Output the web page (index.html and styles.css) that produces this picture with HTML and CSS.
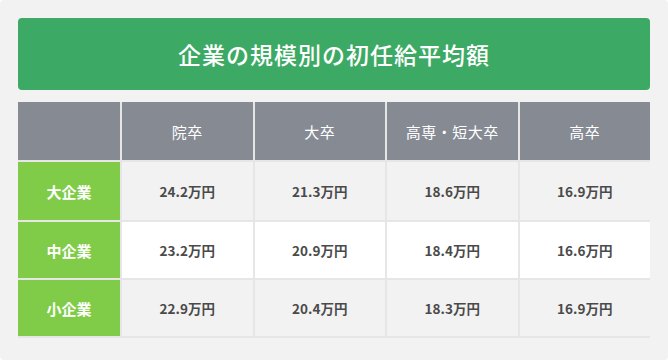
FILE: index.html
```html
<!DOCTYPE html>
<html lang="ja">
<head>
<meta charset="utf-8">
<link rel="stylesheet" href="styles.css">
</head>
<body>
<div class="card">
  <h1 class="title">企業の規模別の初任給平均額</h1>
  <div class="table">
    <div class="th corner"></div>
    <div class="th">院卒</div>
    <div class="th">大卒</div>
    <div class="th">高専・短大卒</div>
    <div class="th">高卒</div>

    <div class="rh r1">大企業</div>
    <div class="td odd r1">24.2万円</div>
    <div class="td odd r1">21.3万円</div>
    <div class="td odd r1">18.6万円</div>
    <div class="td odd r1">16.9万円</div>

    <div class="rh">中企業</div>
    <div class="td even">23.2万円</div>
    <div class="td even">20.9万円</div>
    <div class="td even">18.4万円</div>
    <div class="td even">16.6万円</div>

    <div class="rh">小企業</div>
    <div class="td odd">22.9万円</div>
    <div class="td odd">20.4万円</div>
    <div class="td odd">18.3万円</div>
    <div class="td odd">16.9万円</div>
  </div>
</div>
</body>
</html>
```

FILE: styles.css
```css
html, body {
  margin: 0;
  padding: 0;
  background: #ffffff;
}
body {
  font-family: "Noto Sans CJK JP", "Noto Sans", sans-serif;
}
.card {
  width: 668px;
  height: 360px;
  box-sizing: border-box;
  background: #f2f2f2;
  border-radius: 4px;
  padding: 18px;
}
.title {
  margin: 0 0 12px;
  height: 72px;
  background: #3caa64;
  border-radius: 4px;
  color: #ffffff;
  font-size: 23px;
  font-weight: 500;
  letter-spacing: 1px;
  display: flex;
  align-items: center;
  justify-content: center;
}
.table {
  display: grid;
  grid-template-columns: 102px repeat(4, 1fr);
  grid-template-rows: 58px 58px 56px 56px;
  gap: 2px;
  padding-bottom: 2px;
  background: #e6e6e6;
}
.th, .rh, .td {
  display: flex;
  align-items: center;
  justify-content: center;
}
.th {
  background: #868a93;
  color: #ffffff;
  font-size: 15px;
  letter-spacing: 0.5px;
}
.rh {
  background: #80cc48;
  color: #ffffff;
  font-size: 15px;
  font-weight: 700;
}
.td {
  color: #4a4a4a;
  font-size: 13.5px;
  font-weight: 700;
}
.odd { background: #f2f2f2; }
.even { background: #ffffff; }
```
